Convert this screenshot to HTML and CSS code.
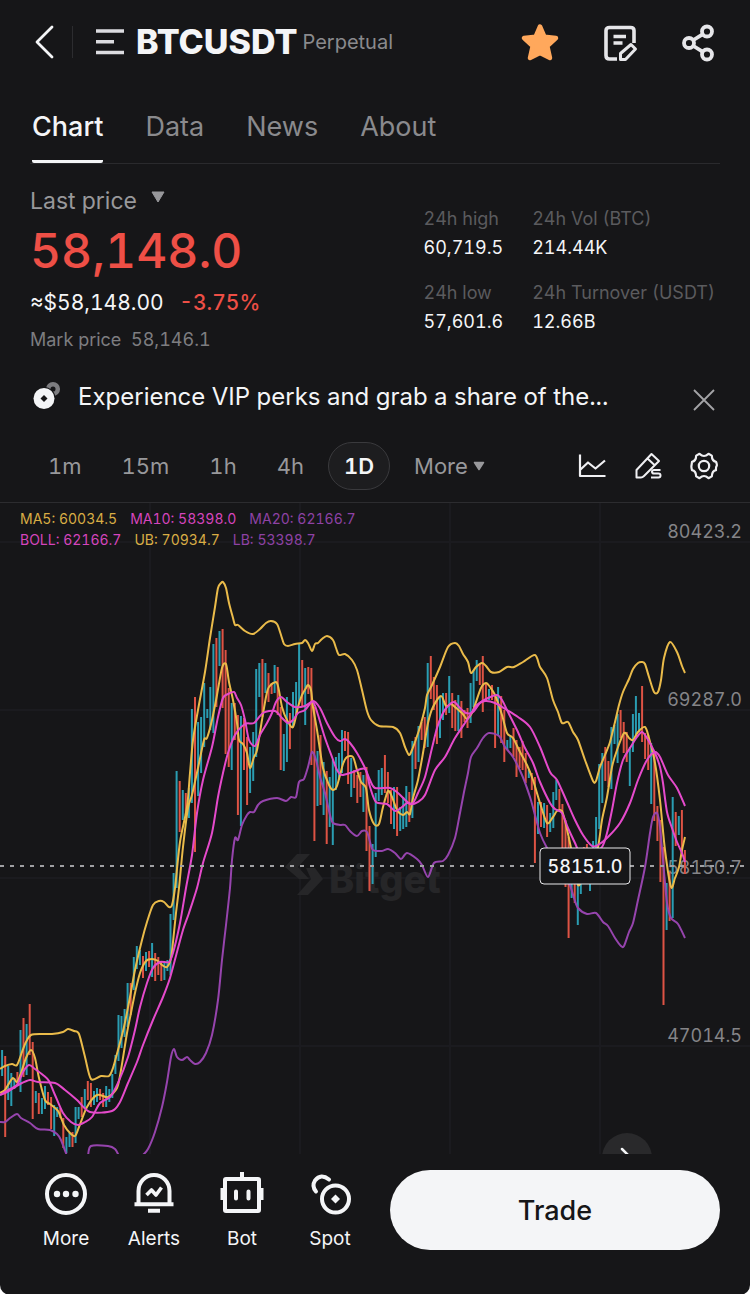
FILE: index.html
```
<!DOCTYPE html>
<html lang="en">
<head>
    <meta charset="UTF-8">
    <meta name="viewport" content="width=device-width, initial-scale=1.0">
    <title>BTCUSDT Perpetual</title>
    <link rel="stylesheet" href="styles.css">
</head>
<body>
<div class="app">

    <header class="topbar">
        <button class="icon-btn" aria-label="Back">
            <svg width="20" height="36" viewBox="0 0 20 36"><path d="M17 3 2 18l15 15" fill="none" stroke="#f4f5f7" stroke-width="2.800" stroke-linecap="round" stroke-linejoin="round"/></svg>
        </button>
        <span class="divider"></span>
        <button class="icon-btn" aria-label="Markets">
            <svg width="28" height="28" viewBox="0 0 28 28"><path d="M0 3h28M0 13.700h18M0 24.500h28" stroke="#dcdce0" stroke-width="3.400"/></svg>
        </button>
        <h1>BTCUSDT</h1>
        <span class="kind">Perpetual</span>
        <div class="actions">
            <button class="icon-btn" aria-label="Favourite">
                <svg width="40" height="40" viewBox="0 0 40 40"><path d="m20 4.500 4.500 10.300 11.500 1.200-8.700 8 2.700 12L20 31 10 36l2.700-12L4 16l11.500-1.200z" fill="#ffa85c" stroke="#ffa85c" stroke-width="4.500" stroke-linejoin="round"/></svg>
            </button>
            <button class="icon-btn" aria-label="Notes">
                <svg width="40" height="40" viewBox="0 0 40 40" fill="none" stroke="#e6e6e9" stroke-width="3.600" stroke-linejoin="round"><path d="M17 37H9.500Q6 37 6 33.500V8.500Q6 5.500 9.500 5.500h21Q34 5.500 34 8.500V21M13.500 14.500H26M13.500 21H22.500"/><path d="m20.500 37.500v-6L31 22.500l4.500 4.500-10 10.500z" stroke-width="3"/></svg>
            </button>
            <button class="icon-btn" aria-label="Share">
                <svg width="40" height="40" viewBox="0 0 40 40" fill="none" stroke="#e6e6e9" stroke-width="3.800"><circle cx="27" cy="9.500" r="5"/><circle cx="9" cy="21" r="5"/><circle cx="27" cy="32.500" r="5"/><path d="M13.500 18 22.500 12.300M13.500 24l9 5.700"/></svg>
            </button>
        </div>
    </header>

    <nav class="tabs">
        <a href="#chart" class="active">Chart</a>
        <a href="#data">Data</a>
        <a href="#news">News</a>
        <a href="#about">About</a>
    </nav>

    <section class="summary">
        <div class="price">
            <button class="price-type">Last price <svg width="14" height="12" viewBox="0 0 14 12"><path d="M1 1h12L7 11z" fill="#98989b" stroke="#98989b" stroke-linejoin="round"/></svg></button>
            <p class="last">58,148.0</p>
            <p class="fiat">≈$58,148.00 <span class="change">-3.75%</span></p>
            <p class="mark">Mark price&nbsp; 58,146.1</p>
        </div>
        <dl class="stats">
            <div><dt>24h high</dt><dd>60,719.5</dd></div>
            <div><dt>24h Vol (BTC)</dt><dd>214.44K</dd></div>
            <div><dt>24h low</dt><dd>57,601.6</dd></div>
            <div><dt>24h Turnover (USDT)</dt><dd>12.66B</dd></div>
        </dl>
    </section>

    <!-- VIP banner -->
    <div class="notice">
        <svg width="30" height="30" viewBox="0 0 30 30"><circle cx="20" cy="8" r="4.800" fill="none" stroke="#7d7d80" stroke-width="4.500"/><circle cx="11" cy="17.500" r="11.500" fill="#161618"/><circle cx="11" cy="17.500" r="10.500" fill="#f4f5f7"/><path d="m11 14 3.500 3.500L11 21l-3.500-3.500z" fill="#161618"/></svg>
        <a href="#vip">Experience VIP perks and grab a share of the...</a>
        <button class="icon-btn" aria-label="Close">
            <svg width="22" height="22" viewBox="0 0 22 22"><path d="m1 1 20 20M21 1 1 21" stroke="#a4a4a7" stroke-width="1.800"/></svg>
        </button>
    </div>

    <div class="toolbar">
        <button>1m</button>
        <button>15m</button>
        <button>1h</button>
        <button>4h</button>
        <button class="selected">1D</button>
        <button>More <svg width="12" height="10" viewBox="0 0 12 10"><path d="M1.500 1.500h9L6 8.500z" fill="#98989b" stroke="#98989b" stroke-width="1.500" stroke-linejoin="round"/></svg></button>
        <div class="tools">
            <button class="icon-btn" aria-label="Indicators">
                <svg width="28" height="28" viewBox="0 0 28 28" fill="none" stroke="#f0f0f3" stroke-width="2.200" stroke-linejoin="round"><path d="M2 2.500V24h25.500M2.500 17.500l7.500-7 7.500 6L27 8.500"/></svg>
            </button>
            <button class="icon-btn" aria-label="Draw">
                <svg width="28" height="28" viewBox="0 0 28 28" fill="none" stroke="#f0f0f3" stroke-width="2" stroke-linejoin="round"><path d="M2.500 25.500V18L17.500 2l7.500 7L10 24q-1.500 1.500-3 1.500zM13.500 6.500l7.500 7"/><path d="M26.500 18H20q-2 0-2 1.800t2 1.800h4.500q2 0 2 2t-2 2h-7.500"/></svg>
            </button>
            <button class="icon-btn" aria-label="Settings">
                <svg width="28" height="28" viewBox="0 0 28 28" fill="none" stroke="#f0f0f3" stroke-width="2.200" stroke-linejoin="round"><path d="M9.500 1.800Q12 4 14 4t4.500-2.200L21.800 3.600Q22 9 26 9.800q1.400 3.200.600 4.200t-.600 4.200q-4 .800-4.200 6.200l-3.300 1.800Q16 24 14 24t-4.500 2.200l-3.300-1.800Q6 19 2 18.200 1.200 15 1.400 14T2 9.800Q6 9 6.200 3.600z"/><circle cx="14" cy="14" r="5.200"/></svg>
            </button>
        </div>
    </div>

    <main class="chart" id="chart">
        <svg class="plot" viewBox="0 503 750 651" role="img" aria-label="BTCUSDT daily chart">
            <g class="grid"><path d="M150 503v651M300 503v651M450 503v651M600 503v651M0 542h750M0 710h750M0 878h750M0 1046h750"/></g>
            <g class="watermark">
                <path d="M297 854h13l-12 13 11 12h-10l-14-12zM306 868h9l8 11-15 16h-11l14-16z"/>
                <text x="329" y="893">Bitget</text>
            </g>
            <g class="axis">
                <text x="742" y="538">80423.2</text>
                <text x="742" y="706">69287.0</text>
                <text x="742" y="874">58150.7</text>
                <text x="742" y="1042">47014.5</text>
            </g>
            <g id="candles"></g>
            <g id="lines"></g>
            <path class="cross" d="M0 866H750"/>
            <rect class="tag" x="540" y="848" width="90" height="36" rx="4"/>
            <text class="tag-text" x="585" y="873">58151.0</text>
        </svg>
        <div class="legend">
            <p><span class="gold">MA5: 60034.5</span><span class="pink">MA10: 58398.0</span><span class="purple">MA20: 62166.7</span></p>
            <p><span class="pink">BOLL: 62166.7</span><span class="gold">UB: 70934.7</span><span class="purple">LB: 53398.7</span></p>
        </div>
        <button class="latest" aria-label="Latest">
            <svg width="20" height="24" viewBox="0 0 20 24"><path d="m5 3 9 9-9 9" fill="none" stroke="#f4f5f7" stroke-width="2.500" stroke-linecap="round"/></svg>
        </button>
    </main>

    <footer class="bottom">
        <button class="item">
            <svg width="44" height="44" viewBox="0 0 44 44"><circle cx="22" cy="22" r="19" fill="none" stroke="#f4f5f7" stroke-width="4"/><g fill="#f4f5f7"><circle cx="13" cy="22" r="3.200"/><circle cx="22" cy="22" r="3.200"/><circle cx="31.500" cy="22" r="3.200"/></g></svg>
            More
        </button>
        <button class="item">
            <svg width="44" height="44" viewBox="0 0 44 44" fill="none" stroke="#f4f5f7" stroke-width="4" stroke-linejoin="round"><path d="M6.500 32V19a15.500 16 0 0 1 31 0v13M2.500 32.300h39M16 38.700h12"/><path d="m14.500 23 5-5 4.500 5 5.500-7.500" stroke-width="3.600"/></svg>
            Alerts
        </button>
        <button class="item">
            <svg width="44" height="44" viewBox="0 0 44 44" fill="none" stroke="#f4f5f7" stroke-width="4" stroke-linejoin="round"><rect x="5" y="7" width="34" height="32" rx="1"/><path d="M22 0v7M2.500 16v12M41.500 16v12"/><path d="M16 19.500v7M28.500 19.500v7" stroke-linecap="round"/></svg>
            Bot
        </button>
        <button class="item">
            <svg width="44" height="44" viewBox="0 0 44 44" fill="none" stroke="#f4f5f7" stroke-width="4"><circle cx="27.500" cy="27" r="13.500"/><path d="M8 19.500Q3.500 14 7 8.500 13 1 21 7.500" stroke-linecap="round"/><path d="m27.500 22.500 4.500 4.500-4.500 4.500-4.500-4.500z" fill="#f4f5f7" stroke="none"/></svg>
            Spot
        </button>
        <button class="trade">Trade</button>
    </footer>

</div>
<script src="chart.js"></script>
</body>
</html>
```
FILE: styles.css
```
/* Global Styles */
* {
    box-sizing: border-box;
}

body {
    margin: 0;
    background: #fff;
    color: #f4f5f7;
    font-family: Inter, "Liberation Sans", sans-serif;
    font-variant-numeric: tabular-nums;
}

h1, p, dl, dd {
    margin: 0;
}

button {
    padding: 0;
    border: none;
    background: none;
    color: inherit;
    font: inherit;
    cursor: pointer;
}

a {
    color: inherit;
    text-decoration: none;
}

svg {
    display: block;
}

.app {
    display: flex;
    flex-direction: column;
    min-height: 100vh;
    background: #161618;
    border-radius: 0 0 10px 10px;
}

/* Top bar */
.topbar {
    display: flex;
    align-items: center;
    height: 82px;
    padding: 1px 30px 0 35px;
}

.divider {
    width: 1px;
    height: 32px;
    margin: 0 23px 0 17px;
    background: #2c2c2f;
}

.topbar h1 {
    margin-left: 12px;
    font-size: 34px;
    font-weight: 800;
    line-height: 44px;
}

.kind {
    margin-left: 5px;
    color: #8a8a8d;
    font-size: 20px;
}

.actions {
    display: flex;
    gap: 40px;
    margin-left: auto;
}

/* Tabs */
.tabs {
    display: flex;
    gap: 42px;
    margin: 0 30px;
    padding-left: 2px;
    border-bottom: 1px solid #2a2a2d;
}

.tabs a {
    height: 81px;
    padding-top: 28px;
    color: #8a8a8d;
    font-size: 27px;
    line-height: 34px;
}

.tabs .active {
    color: #f4f5f7;
    font-weight: 500;
    border-bottom: 3px solid #f4f5f7;
    border-radius: 2px;
}

/* Price summary */
.summary {
    display: flex;
    justify-content: space-between;
    padding: 22px 35px 0 30px;
}

.price-type {
    display: flex;
    gap: 14px;
    color: #98989b;
    font-size: 23px;
    line-height: 30px;
}

.price-type svg {
    margin-top: 5px;
}

.last {
    color: #ee4f46;
    font-size: 48px;
    font-weight: 500;
    line-height: 70px;
}

.fiat {
    font-size: 21px;
    line-height: 34px;
}

.change {
    margin-left: 10px;
    color: #ee4f46;
    font-weight: 500;
}

.mark {
    color: #7d7d80;
    font-size: 18px;
    line-height: 40px;
}

.stats {
    display: grid;
    grid-template-columns: auto auto;
    column-gap: 29px;
    row-gap: 16px;
    align-content: start;
    padding-top: 18px;
    font-size: 18px;
    line-height: 29px;
}

.stats dt {
    color: #5b5b5e;
}

/* Notice */
.notice {
    display: flex;
    align-items: center;
    height: 66px;
    margin-top: 3px;
    padding: 0 35px 0 33px;
}

.notice a {
    flex: 1;
    margin-left: 15px;
    font-size: 24px;
}

.notice button {
    padding-top: 8px;
}

/* Interval toolbar */
.toolbar {
    display: flex;
    align-items: center;
    gap: 8px;
    height: 74px;
    padding: 0 32px;
    border-bottom: 1px solid #2c2c2f;
    color: #98989b;
    font-size: 22px;
}

.toolbar > button {
    display: flex;
    align-items: center;
    gap: 5px;
    height: 48px;
    padding: 0 15px;
    border: 1px solid transparent;
    border-radius: 24px;
}

.toolbar > .selected {
    border-color: #3a3a3d;
    background: #1d1d1f;
    color: #f4f5f7;
    font-weight: 600;
}

.tools {
    display: flex;
    gap: 28px;
    margin-left: auto;
}

/* Chart */
.chart {
    position: relative;
    overflow: hidden;
}

.plot {
    width: 100%;
    height: auto;
}

.grid path {
    stroke: #1b1b1f;
    stroke-width: 2;
}

.watermark {
    fill: #262628;
    font-size: 38px;
    font-weight: 800;
}

.axis {
    fill: #858588;
    font-size: 18px;
    text-anchor: end;
}

.up {
    stroke: #2a9db2;
}

.down {
    stroke: #de5344;
}

.up, .down {
    stroke-width: 2;
}

.line {
    fill: none;
    stroke-width: 2;
    stroke-linejoin: round;
}

.line.gold {
    stroke: #eabb4a;
}

.line.pink {
    stroke: #e54acb;
}

.line.purple {
    stroke: #9644ad;
}

.cross {
    stroke: #a0a0a3;
    stroke-width: 2;
    stroke-dasharray: 4 6;
}

.tag {
    fill: #161618;
    stroke: #e8e8ea;
}

.tag-text {
    fill: #f4f5f7;
    font-size: 18px;
    font-weight: 500;
    text-anchor: middle;
}

.legend {
    position: absolute;
    top: 5px;
    left: 20px;
    font-size: 14px;
    line-height: 21px;
}

.legend span {
    margin-right: 13px;
}

.legend .gold {
    color: #d9ad45;
}

.legend .pink {
    color: #d545bd;
}

.legend .purple {
    color: #8e42a5;
}

.latest {
    position: absolute;
    right: 98px;
    bottom: -29px;
    display: flex;
    align-items: center;
    justify-content: center;
    width: 50px;
    height: 50px;
    border-radius: 50%;
    background: #29292b;
}

/* Bottom bar */
.bottom {
    display: flex;
    align-items: flex-start;
    padding: 16px 30px 44px 22px;
}

.item {
    display: flex;
    flex-direction: column;
    align-items: center;
    gap: 11px;
    width: 88px;
    padding-top: 2px;
    font-size: 19px;
    line-height: 24px;
}

.trade {
    flex: 1;
    height: 80px;
    margin-left: 16px;
    border-radius: 40px;
    background: #f4f5f7;
    color: #161618;
    font-size: 27px;
    font-weight: 500;
}
```
FILE: chart.js
```
// One entry per day: direction, top, bottom
const candles = `
u1050-1076 d1056-1137 u1066-1100 u1073-1106 u1078-1089 d1072-1085 u1030-1092 d1018-1077 u1024-1075 d1004-1055
d1042-1119 u1091-1103 d1093-1114 u1098-1114 u1086-1109 d1092-1105 d1097-1129 u1105-1136 u1107-1117 d1108-1118
d1118-1148 u1137-1153 u1133-1147 d1132-1147 u1107-1143 u1107-1119 d1097-1117 u1089-1108 d1081-1100 d1083-1107
u1091-1105 u1088-1102 d1089-1100 d1093-1107 u1086-1107 u1089-1102 u1074-1098 u1055-1074 u1015-1061 u1016-1048
u1009-1037 u983-1027 d983-1015 u957-990 u946-969 u950-965 d956-978 u952-971 d951-967 u943-977
d953-981 d957-975 d961-981 u962-980 u960-971 u914-975 u873-920 u771-888 d781-832 u790-820
d793-815 u788-818 u709-803 d697-852 u722-796 u717-773 u683-747 u709-718 u687-730 u644-733
d638-707 u631-666 d629-708 d650-754 d688-767 u703-770 d703-740 d715-815 u716-826 d718-770
d737-805 u747-793 u732-781 u669-757 u663-697 d659-717 u663-693 d673-702 d683-694 u665-693
d667-715 d707-770 u734-771 u697-762 d713-749 u692-727 u682-717 u644-703 d660-707 u668-725
d667-694 d668-765 d707-841 u751-806 d735-805 u762-815 d771-844 u777-827 u760-845 u757-790
u753-780 u730-773 d731-751 d732-784 u758-797 d770-788 d775-803 d772-797 u775-812 d767-851
d826-891 u844-884 u793-857 u770-801 u768-795 d755-793 d772-803 d790-824 u787-829 d787-836
u807-831 u797-829 u786-827 d792-822 u741-818 d737-769 u726-762 d722-740 d717-748 u663-747
d656-699 d677-710 d685-744 u697-738 u693-720 d693-715 u676-713 d693-728 d700-731 u695-731
d701-738 d710-722 d708-728 u683-723 u670-707 u660-681 d663-685 d656-712 d683-700 u689-700
d685-700 d695-748 u687-735 d696-743 d710-762 u740-750 u735-748 d728-757 d740-777 d747-768
d741-770 d753-783 u770-778 d773-790 d777-863 u802-834 d802-827 u803-828 d805-837 u813-832
u792-828 u780-800 d789-810 d804-850 d820-887 d837-938 u867-898 d873-903 u873-925 u853-894
d847-867 d844-867 u850-891 u841-873 u817-853 u764-829 u753-803 d747-781 d761-787 u727-789
u725-744 u714-763 d710-738 d722-753 d732-762 u747-786 u714-752 u696-737 u713-732 d686-742
d733-759 d735-770 u743-804 d753-821 d806-841 d820-882 d847-1005 u883-930 d872-921 u797-918
d812-846 u816-835 d810-853 d850-874`.trim().split(/\s+/);

const lines = [
    // lower band
    ['purple', '0,1122 5,1122 10,1118 17,1114 21,1118 30,1123 38,1129 50,1130 57,1134 61,1140 67,1156'],
    ['purple', '88,1156 91,1146 108,1146 115,1149 119,1156'],
    ['purple', '142,1156 148,1149 155,1132 162,1107 167,1082 171,1057 174,1049 177,1057 182,1060 187,1057 190,1060 195,1064 200,1062 206,1053 212,1035 218,1000 222,960 226,925 230,888 232,860 235,838 238,840 242,825 247,815 250,812 254,812 258,805 263,801 277,798 286,801 291,797 296,797 299,782 304,779 308,767 312,752 316,760 320,777 325,793 330,815 333,823 340,825 345,825 350,831 357,836 362,831 367,832 370,842 373,850 382,851 388,849 395,853 401,859 407,853 417,859 422,865 428,877 434,863 443,861 448,855 455,838 460,813 464,792 468,773 471,757 477,748 483,738 489,733 499,736 505,747 513,757 522,775 530,797 535,815 540,833 547,848 558,866 569,883 574,898 578,908 587,914 596,913 603,922 608,926 615,938 621,946 624,946 629,932 633,923 638,900 645,867 650,833 653,817 657,813 660,827 663,860 667,903 671,918 678,924 685,938'],
    // upper band
    ['gold', '0,1069 5,1066 12,1064 17,1065 22,1052 26,1042 31,1035 42,1034 52,1034 63,1032 68,1029 74,1031 79,1034 85,1057 91,1079 101,1076 109,1076 113,1068 118,1050 124,1027 130,997 135,970 142,940 147,922 153,905 159,901 164,902 169,907 172,905 175,888 180,842 187,807 190,773 193,740 198,710 205,672 210,638 215,607 218,588 221,583 223,582 226,588 229,603 233,618 235,625 238,625 245,631 253,634 260,629 266,623 271,621 277,624 281,635 284,644 288,646 295,644 302,643 305,640 308,643 312,651 315,644 318,643 322,639 327,636 333,640 336,648 339,655 345,654 352,660 357,670 362,690 367,711 371,720 379,726 393,727 400,733 405,747 409,755 412,750 415,742 420,727 425,708 427,695 432,685 440,667 448,647 455,643 459,646 463,654 468,662 471,673 476,667 482,663 486,666 491,672 499,672 507,667 514,667 523,662 535,655 540,667 547,678 553,700 558,712 562,723 568,722 573,732 578,740 585,760 593,781 596,781 600,767 605,755 610,742 615,722 619,705 623,692 629,679 633,669 638,663 642,662 645,664 649,677 654,692 658,692 661,680 664,658 670,642 677,652 682,666 685,673'],
    // MA5
    ['gold', '0,1093 5,1090 8,1085 13,1078 17,1082 21,1073 26,1058 31,1050 35,1058 39,1078 45,1100 50,1104 58,1111 64,1125 70,1133 75,1136 79,1127 87,1107 97,1095 108,1097 117,1088 121,1070 127,1033 131,1013 135,993 140,973 146,961 152,959 158,961 162,965 167,967 171,958 173,942 176,913 179,888 183,847 188,808 192,795 198,768 204,740 207,738 212,720 217,695 222,668 226,664 229,682 233,700 237,723 239,740 243,744 247,753 250,768 254,757 257,750 262,720 266,697 269,687 277,683 282,707 287,720 293,727 298,707 302,695 306,688 308,685 311,690 313,707 317,730 323,768 329,785 333,790 337,786 343,764 347,757 353,757 357,770 361,782 366,788 369,810 374,824 379,824 383,807 388,791 392,797 397,810 403,815 407,812 410,814 413,798 418,780 423,753 428,723 433,707 441,696 446,706 451,704 455,707 462,713 467,719 472,713 475,705 481,688 486,683 490,687 495,695 502,715 507,733 513,738 520,752 527,765 533,780 540,803 547,823 553,817 557,811 562,811 566,825 572,853 578,885 585,873 592,863 598,847 602,820 607,797 612,767 617,750 624,733 629,738 633,740 638,732 645,727 649,738 655,763 660,800 665,850 671,887 675,878 679,867 682,850 685,837'],
    // MA10
    ['pink', '0,1095 8,1090 17,1085 23,1072 29,1065 35,1069 43,1075 49,1081 55,1095 63,1113 71,1122 78,1125 85,1122 92,1117 100,1103 110,1097 118,1083 128,1057 135,1030 140,1007 147,983 153,968 160,962 169,962 173,953 180,923 186,888 192,855 197,813 203,780 212,747 218,717 223,698 228,694 234,692 237,698 241,705 245,720 249,740 255,746 260,735 267,723 272,713 276,702 281,697 287,702 295,707 305,706 313,702 318,715 325,738 332,757 337,770 342,775 353,772 365,769 370,787 376,802 387,804 395,811 402,807 407,803 413,803 418,793 425,777 432,748 437,728 442,715 447,707 454,702 460,708 466,713 473,712 480,703 488,698 497,695 502,700 507,710 517,730 525,748 533,763 540,782 550,803 555,809 562,813 568,828 575,843 580,853 590,856 602,847 607,833 612,810 617,783 623,760 630,748 637,737 642,732 647,738 655,753 660,767 663,783 667,812 672,828 677,842 682,853 685,862'],
    // MA20, the middle band
    ['pink', '0,1095 7,1092 20,1084 30,1080 38,1082 55,1083 65,1090 77,1100 90,1112 112,1111 120,1102 128,1083 137,1062 143,1045 153,1020 163,997 170,978 177,952 183,930 189,913 197,888 203,863 212,833 218,797 223,773 228,753 235,735 245,724 254,723 263,713 275,711 282,718 288,723 293,720 298,713 305,710 313,701 320,708 327,723 335,737 340,741 345,739 350,743 357,753 365,768 370,780 375,788 390,788 398,793 410,804 418,802 425,795 435,770 445,757 455,738 467,720 477,705 485,701 495,703 507,710 518,717 530,727 540,747 550,772 557,780 567,802 575,820 583,835 592,846 598,845 608,837 620,823 630,803 638,780 647,760 655,752 660,757 668,775 677,788 685,806']
];

// Smooth curve through the points (Catmull-Rom)
function curve(text) {
    const p = text.split(' ').map(pair => pair.split(',').map(Number));
    let d = `M${p[0]}`;
    for (let i = 0; i < p.length - 1; i++) {
        const a = p[i - 1] || p[i];
        const b = p[i];
        const c = p[i + 1];
        const e = p[i + 2] || c;
        d += `C${b[0] + (c[0] - a[0]) / 7},${b[1] + (c[1] - a[1]) / 7} ${c[0] - (e[0] - b[0]) / 7},${c[1] - (e[1] - b[1]) / 7} ${c}`;
    }
    return d;
}

const first = 2.1;
const step = 3.062;

document.getElementById('candles').innerHTML = candles.map((candle, i) => {
    const [top, bottom] = candle.slice(1).split('-');
    const x = (first + step * i).toFixed(1);
    return `<path class="${candle[0] === 'u' ? 'up' : 'down'}" d="M${x} ${top}V${bottom}"/>`;
}).join('');

document.getElementById('lines').innerHTML = lines.map(([color, points]) =>
    `<path class="line ${color}" d="${curve(points)}"/>`
).join('');
```
